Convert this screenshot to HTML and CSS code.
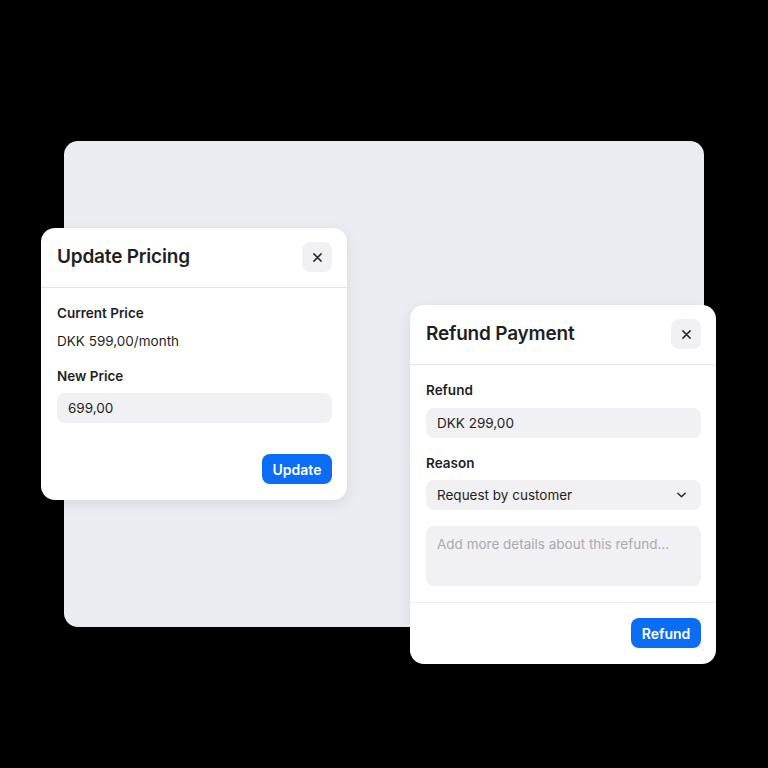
FILE: index.html
```html
<!DOCTYPE html>
<html lang="en">
<head>
    <meta charset="UTF-8">
    <meta name="viewport" content="width=device-width, initial-scale=1.0">
    <title>Billing dialogs</title>
    <link rel="stylesheet" href="styles.css">
</head>
<body>
    <div class="stage">
        <div class="canvas"></div>

        <div class="dialog" id="pricingDialog">
            <div class="dialog-header">
                <h2 class="dialog-title">Update Pricing</h2>
                <button class="close-btn" aria-label="Close">
                    <svg width="9" height="9" viewBox="0 0 10 10"><path d="M1 1L9 9M9 1L1 9" stroke="#2a2a30" stroke-width="1.7" stroke-linecap="round"/></svg>
                </button>
            </div>
            <div class="dialog-body">
                <div class="label">Current Price</div>
                <div class="value">DKK 599,00/month</div>
                <div class="label gap">New Price</div>
                <div class="field">699,00</div>
            </div>
            <div class="dialog-footer">
                <button class="primary-btn">Update</button>
            </div>
        </div>

        <div class="dialog" id="refundDialog">
            <div class="dialog-header">
                <h2 class="dialog-title">Refund Payment</h2>
                <button class="close-btn" aria-label="Close">
                    <svg width="9" height="9" viewBox="0 0 10 10"><path d="M1 1L9 9M9 1L1 9" stroke="#2a2a30" stroke-width="1.7" stroke-linecap="round"/></svg>
                </button>
            </div>
            <div class="dialog-body">
                <div class="label">Refund</div>
                <div class="field">DKK 299,00</div>
                <div class="label gap">Reason</div>
                <div class="field select">
                    <span>Request by customer</span>
                    <svg width="9" height="6" viewBox="0 0 10 6"><path d="M1 1L5 5L9 1" fill="none" stroke="#2a2a30" stroke-width="1.7" stroke-linecap="round" stroke-linejoin="round"/></svg>
                </div>
                <div class="field textarea">Add more details about this refund...</div>
            </div>
            <div class="dialog-footer bordered">
                <button class="primary-btn">Refund</button>
            </div>
        </div>
    </div>
</body>
</html>
```

FILE: styles.css
```css
body {
    margin: 0;
    padding: 0;
    background-color: #000;
    font-family: Inter, "Noto Sans", sans-serif;
    color: #1e1f24;
}
.stage {
    position: relative;
    width: 768px;
    height: 768px;
    overflow: hidden;
}
.canvas {
    position: absolute;
    left: 64px;
    top: 141px;
    width: 640px;
    height: 486px;
    background-color: #ebebf2;
    border-radius: 14px;
}
.dialog {
    position: absolute;
    width: 306px;
    background-color: #fff;
    border-radius: 14px;
    box-shadow: 0 4px 14px rgba(0, 0, 0, 0.08);
    box-sizing: border-box;
}
#pricingDialog {
    left: 41px;
    top: 228px;
}
#refundDialog {
    left: 410px;
    top: 305px;
}
.dialog-header {
    display: flex;
    align-items: center;
    justify-content: space-between;
    padding: 14px 15px 15px 16px;
    border-bottom: 1px solid #e6e6ea;
}
.dialog-title {
    margin: 0;
    font-size: 19px;
    font-weight: 600;
    letter-spacing: -0.2px;
    line-height: 24px;
}
.close-btn {
    width: 30px;
    height: 30px;
    border: none;
    border-radius: 8px;
    background-color: #f1f1f4;
    display: flex;
    align-items: center;
    justify-content: center;
    padding: 0;
}
.dialog-body {
    padding: 15px 15px 16px 16px;
    display: flex;
    flex-direction: column;
}
.label {
    font-size: 13.5px;
    font-weight: 600;
    line-height: 20px;
    margin-bottom: 8px;
}
.label.gap {
    margin-top: 15px;
    margin-bottom: 7px;
}
.value {
    font-size: 13.5px;
    line-height: 20px;
}
.field {
    height: 30px;
    box-sizing: border-box;
    background-color: #f1f1f4;
    border-radius: 8px;
    padding: 0 11px;
    font-size: 13.5px;
    line-height: 30px;
}
.select {
    display: flex;
    align-items: center;
    justify-content: space-between;
    padding-right: 15px;
}
.textarea {
    height: 60px;
    margin-top: 16px;
    line-height: 20px;
    padding-top: 8px;
    color: #a9a9b2;
}
.dialog-footer {
    display: flex;
    justify-content: flex-end;
    padding: 15px 15px 16px 16px;
}
.dialog-footer.bordered {
    border-top: 1px solid #efeff2;
}
.primary-btn {
    font-family: Inter, "Noto Sans", sans-serif;
    background-color: #0b6cf4;
    color: #fff;
    border: none;
    border-radius: 8px;
    width: 70px;
    height: 30px;
    font-size: 14px;
    font-weight: 600;
    padding: 0;
}
```
